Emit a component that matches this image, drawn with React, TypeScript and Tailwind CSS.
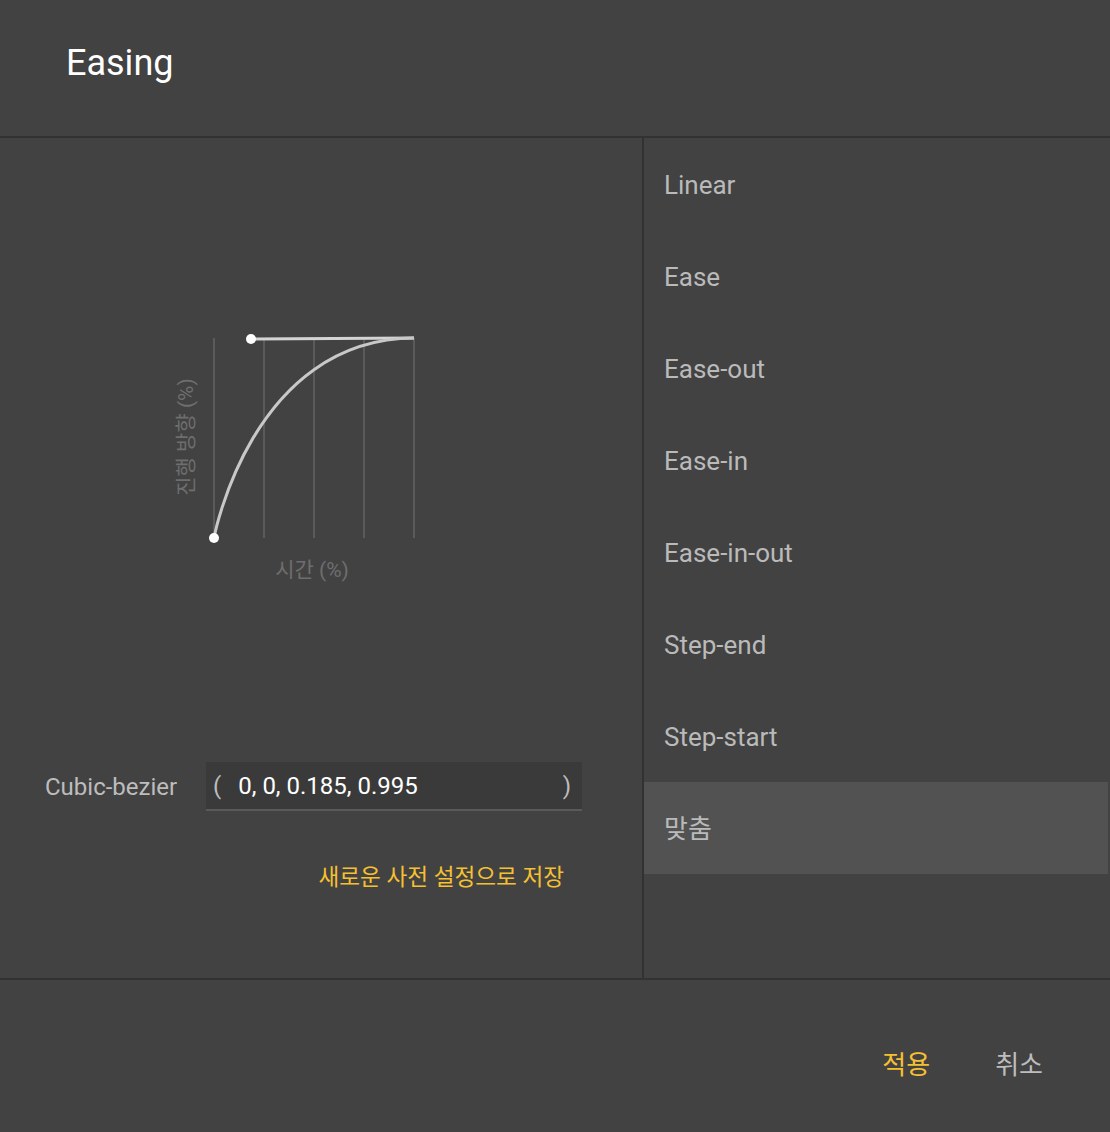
import React from 'react';

const presets = ['Linear', 'Ease', 'Ease-out', 'Ease-in', 'Ease-in-out', 'Step-end', 'Step-start', '맞춤'];

const EasingCurve: React.FC = () => {
  const grid = [54, 104, 154, 204, 254];
  return (
    <svg width="280" height="280" viewBox="0 0 280 280" className="block">
      {grid.map((x) => (
        <line key={x} x1={x} y1={18} x2={x} y2={218} stroke="#5a5a5a" strokeWidth={2} />
      ))}
      <line x1={91} y1={19} x2={254} y2={18} stroke="#d4d4d4" strokeWidth={3} />
      <path d="M54 218 C54 218 91 19 254 18" fill="none" stroke="#c8c8c8" strokeWidth={3} />
      <circle cx={91} cy={19} r={5} fill="#ffffff" />
      <circle cx={54} cy={218} r={5} fill="#ffffff" />
      <text
        x={26}
        y={117}
        transform="rotate(-90 26 117)"
        textAnchor="middle"
        dominantBaseline="central"
        fill="#6e6e6e"
        fontSize={21}
        fontFamily="Roboto, 'Noto Sans CJK KR', sans-serif"
      >
        진행 방향 (%)
      </text>
      <text
        x={152}
        y={250}
        textAnchor="middle"
        dominantBaseline="central"
        fill="#6e6e6e"
        fontSize={21}
        fontFamily="Roboto, 'Noto Sans CJK KR', sans-serif"
      >
        시간 (%)
      </text>
    </svg>
  );
};

export default function App() {
  const selected = '맞춤';
  return (
    <div className="w-[1110px] h-[1132px] bg-[#424242] flex flex-col font-['Roboto','Noto_Sans_CJK_KR',sans-serif]">
      <div className="h-[138px] shrink-0 border-b-2 border-[#323232] flex items-center pl-[66px]">
        <h1 className="text-[36px] text-white leading-none -mt-[10px]">Easing</h1>
      </div>

      <div className="h-[842px] shrink-0 flex border-b-2 border-[#323232]">
        <div className="w-[644px] shrink-0 border-r-2 border-[#323232] flex flex-col">
          <div className="ml-[160px] mt-[182px]">
            <EasingCurve />
          </div>
          <div className="flex items-center mt-[162px]">
            <span className="ml-[45px] w-[161px] text-[24px] text-[#bdbdbd]">Cubic-bezier</span>
            <div className="w-[376px] h-[49px] bg-[#3a3a3a] border-b-2 border-[#5a5a5a] flex items-center text-[24px] px-[7px]">
              <span className="text-[#bdbdbd]">(</span>
              <span className="ml-[17px] text-white">0, 0, 0.185, 0.995</span>
              <span className="ml-auto mr-[4px] text-[#bdbdbd]">)</span>
            </div>
          </div>
          <div className="w-[564px] flex justify-end mt-[50px]">
            <button className="text-[22.6px] text-[#f6c030]">새로운 사전 설정으로 저장</button>
          </div>
        </div>

        <div className="flex-1 flex flex-col pr-[2px]">
          {presets.map((p) => (
            <div
              key={p}
              className={`h-[92px] shrink-0 flex items-center pl-[20px] pt-[2px] text-[26px] text-[#bababa] ${
                p === selected ? 'bg-[#525252]' : ''
              }`}
            >
              {p}
            </div>
          ))}
        </div>
      </div>

      <div className="flex-1 flex items-center justify-end pr-[67px] pt-[18px] gap-[65px]">
        <button className="text-[26px] text-[#f6c030]">적용</button>
        <button className="text-[26px] text-[#bdbdbd]">취소</button>
      </div>
    </div>
  );
}
